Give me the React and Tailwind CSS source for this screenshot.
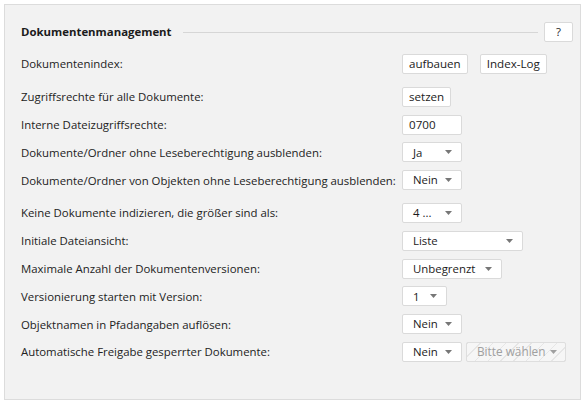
import React from 'react';

const font = { fontFamily: '"Open Sans", "Noto Sans", sans-serif' };

function Btn({ children }) {
    return (
        <button className="h-[20px] px-[6px] bg-white border border-[#dadada] rounded-[2px] text-[11.6px] leading-none text-[#1b1b1b]">
            {children}
        </button>
    );
}

function Select({ value, width, disabled }) {
    return (
        <div
            className={`h-[20px] flex items-center justify-between pl-[10px] border rounded-[2px] ${
                disabled
                    ? 'pr-[8px] text-[11.8px] border-[#dedede] text-[#a0a0a0] bg-[repeating-linear-gradient(135deg,#e6e6e6_0,#e6e6e6_1px,#f6f6f6_1px,#f6f6f6_9px)]'
                    : 'pr-[9px] text-[11.4px] border-[#dadada] bg-white text-[#1b1b1b]'
            }`}
            style={{ width }}
        >
            <span className="leading-none whitespace-nowrap">{value}</span>
            <svg width="7" height="4" viewBox="0 0 7 4" className="shrink-0 ml-[4px]">
                <path d="M0 0h7L3.5 4z" fill={disabled ? '#a0a0a0' : '#777'} />
            </svg>
        </div>
    );
}

function Row({ label, children, extra }) {
    return (
        <div className={`flex items-center h-[20px] ${extra ? 'mt-[5px]' : ''}`}>
            <div className="w-[381px] text-[11.4px] text-[#222] whitespace-nowrap">{label}</div>
            <div className="flex items-center">{children}</div>
        </div>
    );
}

export default function App() {
    return (
        <div className="w-[587px] h-[407px] bg-white p-[4px]" style={font}>
            <div className="w-[577px] h-[396px] bg-[#f2f2f2] border border-[#dcdcdc] pl-[16px] pt-[17px]">
                <div className="flex items-center h-[20px] pr-[7px]">
                    <span className="text-[11.4px] font-bold text-[#1b1b1b] whitespace-nowrap">Dokumentenmanagement</span>
                    <div className="ml-[11px] flex-1 h-px bg-[#d6d6d6]" />
                    <button className="ml-[6px] h-[20px] w-[29px] bg-white border border-[#dadada] rounded-[2px] text-[11.4px] leading-none text-[#1b1b1b]">?</button>
                </div>
                <div className="flex flex-col gap-[7.8px] mt-[12px]">
                    <Row label="Dokumentenindex:">
                        <Btn>aufbauen</Btn>
                        <div className="ml-[12px] flex"><Btn>Index-Log</Btn></div>
                    </Row>
                    <Row label="Zugriffsrechte für alle Dokumente:" extra>
                        <Btn>setzen</Btn>
                    </Row>
                    <Row label="Interne Dateizugriffsrechte:">
                        <div className="w-[60px] h-[20px] bg-white border border-[#dadada] rounded-[2px] text-[11.6px] flex items-center pl-[6px] text-[#1b1b1b]">0700</div>
                    </Row>
                    <Row label="Dokumente/Ordner ohne Leseberechtigung ausblenden:">
                        <Select value="Ja" width={60} />
                    </Row>
                    <Row label="Dokumente/Ordner von Objekten ohne Leseberechtigung ausblenden:">
                        <Select value="Nein" width={60} />
                    </Row>
                    <Row label="Keine Dokumente indizieren, die größer sind als:" extra>
                        <Select value="4 ..." width={60} />
                    </Row>
                    <Row label="Initiale Dateiansicht:">
                        <Select value="Liste" width={121} />
                    </Row>
                    <Row label="Maximale Anzahl der Dokumentenversionen:">
                        <Select value="Unbegrenzt" width={100} />
                    </Row>
                    <Row label="Versionierung starten mit Version:">
                        <Select value="1" width={45} />
                    </Row>
                    <Row label="Objektnamen in Pfadangaben auflösen:">
                        <Select value="Nein" width={60} />
                    </Row>
                    <Row label="Automatische Freigabe gesperrter Dokumente:">
                        <Select value="Nein" width={60} />
                        <div className="ml-[4px] flex"><Select value="Bitte wählen" width={100} disabled /></div>
                    </Row>
                </div>
            </div>
        </div>
    );
}
